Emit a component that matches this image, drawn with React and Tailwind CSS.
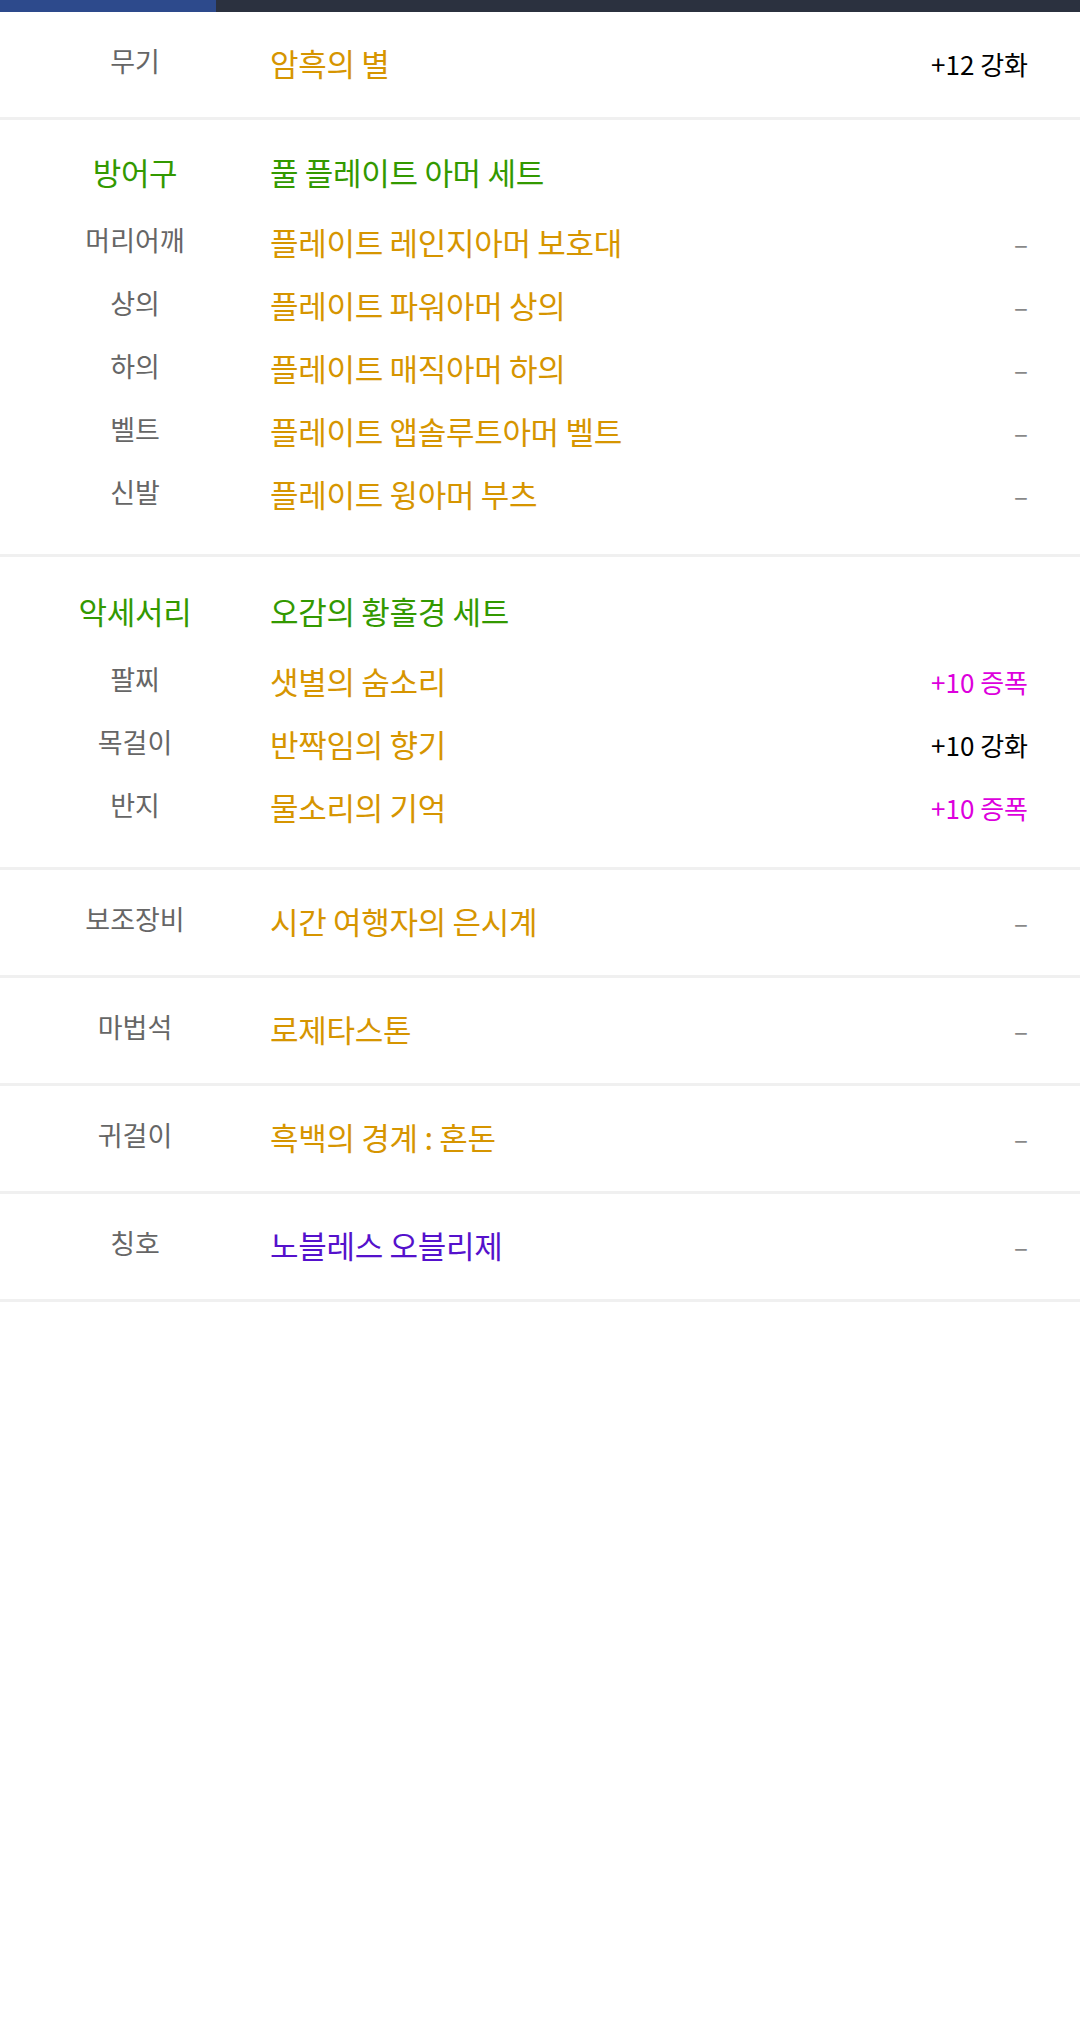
import React from 'react';

const font = { fontFamily: '"Noto Sans CJK KR", "Noto Sans", sans-serif' };

const groups = [
  {
    single: true,
    label: '무기',
    value: '암흑의 별',
    valueColor: 'text-[#d69500]',
    extra: '+12 강화',
    extraColor: 'text-black',
  },
  {
    title: '방어구',
    setName: '풀 플레이트 아머 세트',
    pad: 'pt-[31px] pb-[39px]',
    items: [
      { label: '머리어깨', value: '플레이트 레인지아머 보호대' },
      { label: '상의', value: '플레이트 파워아머 상의' },
      { label: '하의', value: '플레이트 매직아머 하의' },
      { label: '벨트', value: '플레이트 앱솔루트아머 벨트' },
      { label: '신발', value: '플레이트 윙아머 부츠' },
    ],
  },
  {
    title: '악세서리',
    setName: '오감의 황홀경 세트',
    pad: 'pt-[33px] pb-[39px]',
    items: [
      { label: '팔찌', value: '샛별의 숨소리', extra: '+10 증폭', extraColor: 'text-[#dd00dd]' },
      { label: '목걸이', value: '반짝임의 향기', extra: '+10 강화', extraColor: 'text-black' },
      { label: '반지', value: '물소리의 기억', extra: '+10 증폭', extraColor: 'text-[#dd00dd]' },
    ],
  },
  { single: true, label: '보조장비', value: '시간 여행자의 은시계' },
  { single: true, label: '마법석', value: '로제타스톤' },
  { single: true, label: '귀걸이', value: '흑백의 경계 : 혼돈' },
  { single: true, label: '칭호', value: '노블레스 오블리제', valueColor: 'text-[#5511cc]' },
];

const Row = ({ label, value, valueColor = 'text-[#d69500]', extra, extraColor, labelColor = 'text-[#666666]', heading }) => (
  <div className="flex items-center h-[42px]">
    <div
      className={`w-[270px] shrink-0 text-center ${heading ? 'text-[31px] tracking-[-0.3px] ' + labelColor : 'text-[27px] text-[#666666] -mt-[4px]'}`}
    >
      {label}
    </div>
    <div className={`flex-1 text-[31px] tracking-[-0.3px] ${valueColor}`}>{value}</div>
    {!heading && (
      <div className={`pr-[52px] text-[26px] ${extra ? extraColor : 'text-[#888888]'}`}>
        {extra || '–'}
      </div>
    )}
  </div>
);

const App = () => {
  return (
    <div className="min-h-screen bg-white" style={font}>
      <div className="flex h-[12px]">
        <div className="w-1/5 bg-[#2d4a8c]" />
        <div className="flex-1 bg-[#2b313f]" />
      </div>
      {groups.map((g, i) => (
        <div key={i} className="border-b-[3px] border-[#f0f0f0]">
          {g.single ? (
            <div className="pt-[30px] pb-[33px]">
              <Row label={g.label} value={g.value} valueColor={g.valueColor} extra={g.extra} extraColor={g.extraColor} />
            </div>
          ) : (
            <div className={g.pad}>
              <Row heading label={g.title} value={g.setName} labelColor="text-[#339900]" valueColor="text-[#339900]" />
              <div className="mt-[28px] flex flex-col gap-[21px]">
                {g.items.map((it) => (
                  <Row key={it.label} {...it} />
                ))}
              </div>
            </div>
          )}
        </div>
      ))}
    </div>
  );
};

export default App;
